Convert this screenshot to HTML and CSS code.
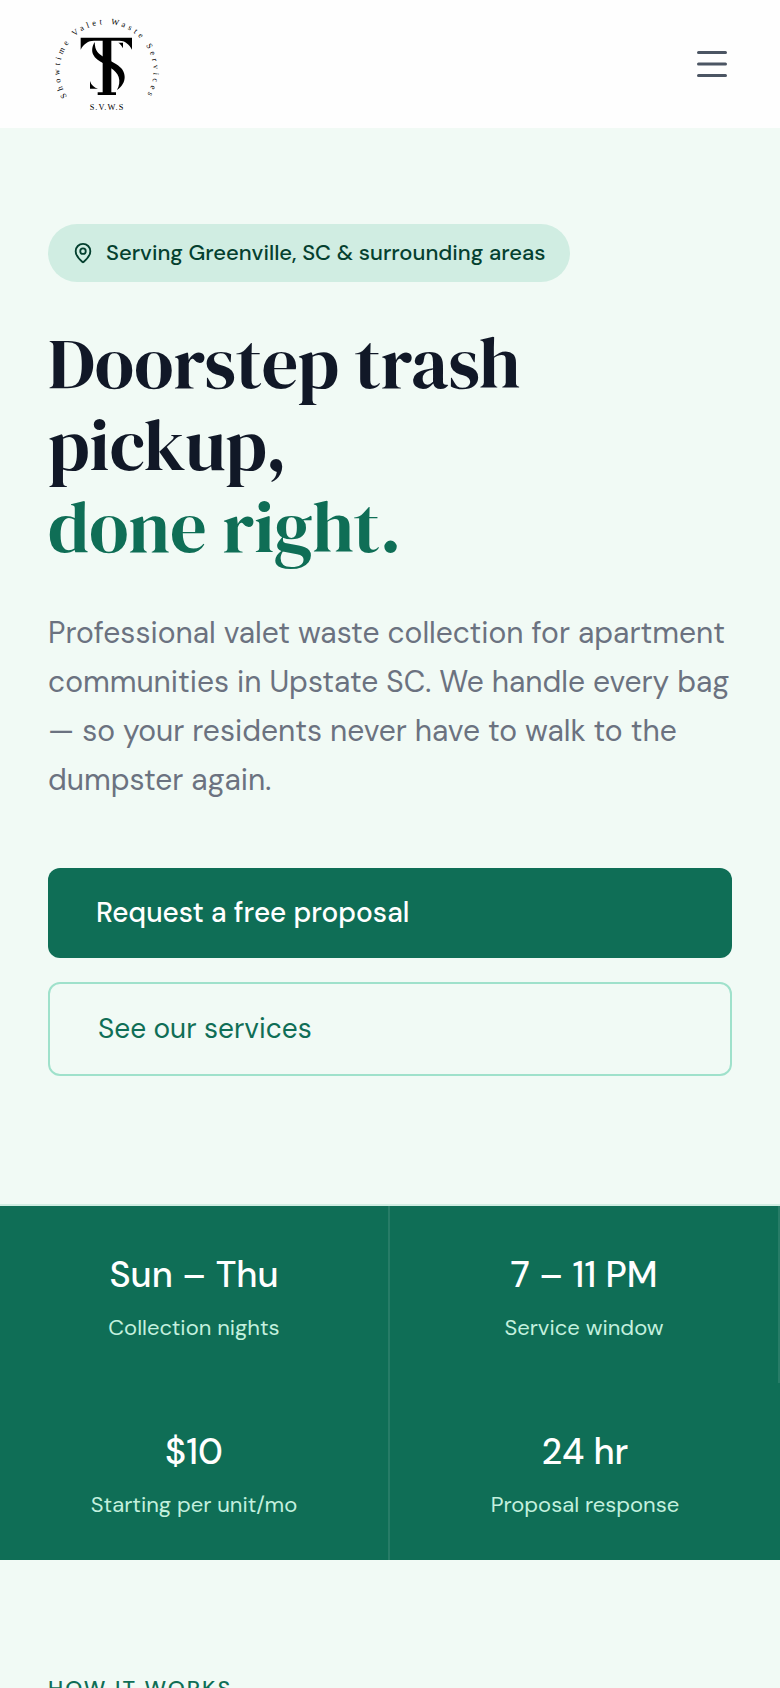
FILE: index.html
```html
<!DOCTYPE html>
<html lang="en">
<head>
<meta charset="utf-8">
<meta name="viewport" content="width=device-width, initial-scale=1">
<title>Showtime Valet Waste Services</title>
<link rel="stylesheet" href="styles.css">
</head>
<body>
<header class="site-header">
  <a class="logo" href="#home" aria-label="Showtime Valet Waste Services">
    <svg class="logo-mark" viewBox="24 24 336 336" aria-hidden="true">
      <defs>
        <path id="ring" d="M81 290A141 141 0 1 1 318 290"/>
      </defs>
      <text class="logo-ring"><textPath href="#ring">Showtime Valet Waste Services</textPath></text>
      <path d="M122 113H276V149C268 132 254 122 238 122H214V277H228V285H173V277H188V122H162C145 122 130 132 122 149Z"/>
      <path d="M164 126C157 137 154 151 159 163C165 176 177 183 190 190L212 204C223 211 232 220 236 231C240 244 238 257 231 270C246 260 254 246 254 231C254 215 245 203 229 193L190 170C174 161 165 153 164 126Z"/>
      <path d="M235 128H249V145C246 138 241 132 235 128ZM150 243V266H174C163 263 154 256 150 243Z"/>
      <text class="logo-initials" x="201" y="330" text-anchor="middle">S.V.W.S</text>
    </svg>
  </a>
  <button class="menu-button" type="button" aria-label="Open menu">
    <svg class="menu-icon" viewBox="0 0 40 40" aria-hidden="true"><path d="M6.500 8.500H33.500M6.500 20H33.500M6.500 31.500H33.500"/></svg>
  </button>
</header>
<main>
  <section class="hero" id="home">
    <p class="badge">
      <svg class="pin-icon" viewBox="0 0 24 24" aria-hidden="true"><path d="M20 10c0 4.993-5.539 10.193-7.399 11.799a1 1 0 0 1-1.202 0C9.539 20.193 4 14.993 4 10a8 8 0 0 1 16 0"/><circle cx="12" cy="10" r="3"/></svg>
      <span>Serving Greenville, SC &amp; surrounding areas</span>
    </p>
    <h1 class="hero-title">Doorstep trash pickup,<br><span class="accent">done right.</span></h1>
    <p class="hero-text">Professional valet waste collection for apartment communities in Upstate SC. We handle every bag — so your residents never have to walk to the dumpster again.</p>
    <div class="actions">
      <a class="button button-primary" href="#contact">Request a free proposal</a>
      <a class="button button-outline" href="#services">See our services</a>
    </div>
  </section>
  <dl class="stats">
    <div class="stat"><dt class="stat-label">Collection nights</dt><dd class="stat-value">Sun – Thu</dd></div>
    <div class="stat"><dt class="stat-label">Service window</dt><dd class="stat-value">7 – 11 PM</dd></div>
    <div class="stat"><dt class="stat-label">Starting per unit/mo</dt><dd class="stat-value">$10</dd></div>
    <div class="stat"><dt class="stat-label">Proposal response</dt><dd class="stat-value">24 hr</dd></div>
  </dl>
  <section class="steps">
    <h2 class="eyebrow">How it works</h2>
  </section>
</main>
</body>
</html>
```
FILE: styles.css
```css
* {
  box-sizing: border-box;
}

body {
  margin: 0;
  background: #f1faf5;
  color: #111827;
  font-family: "DM Sans", "Open Sans", sans-serif;
  font-size: 22px;
}

h1, h2, p, dl, dd {
  margin: 0;
}

.site-header {
  display: flex;
  align-items: center;
  justify-content: space-between;
  padding: 8px 48px;
  background: #fefefe;
}

.logo {
  display: block;
  color: #000;
}

.logo-mark {
  display: block;
  width: 112px;
  height: 112px;
  fill: currentColor;
}

.logo-ring {
  font: 25px "Liberation Serif", serif;
  letter-spacing: 10px;
}

.logo-initials {
  font: 25px "Liberation Serif", serif;
  letter-spacing: 3px;
}

.menu-button {
  padding: 0;
  border: 0;
  background: none;
  color: #4b5563;
  cursor: pointer;
}

.menu-icon {
  display: block;
  width: 40px;
  height: 40px;
  fill: none;
  stroke: currentColor;
  stroke-width: 3;
  stroke-linecap: round;
}

.hero {
  padding: 96px 48px 128px;
  border-bottom: 2px solid #d0ede2;
}

.badge {
  display: flex;
  align-items: center;
  gap: 12px;
  width: fit-content;
  padding: 12px 24px;
  border-radius: 40px;
  background: #d0ede2;
  color: #04402f;
  font-weight: 500;
  line-height: 34px;
}

.pin-icon {
  flex: none;
  width: 22px;
  height: 22px;
  fill: none;
  stroke: currentColor;
  stroke-width: 2;
  stroke-linecap: round;
  stroke-linejoin: round;
}

.hero-title {
  margin-top: 40px;
  font-family: "DM Serif Display", "Liberation Serif", serif;
  font-size: 72px;
  font-weight: 400;
  line-height: 82px;
}

.accent {
  color: #0f6e56;
}

.hero-text {
  margin-top: 40px;
  color: #6b7280;
  font-size: 30px;
  line-height: 49px;
}

.actions {
  display: grid;
  gap: 24px;
  margin-top: 64px;
}

.button {
  padding: 24px 48px;
  border-radius: 12px;
  font-size: 28px;
  line-height: 42px;
  text-decoration: none;
}

.button-primary {
  background: #0f6e56;
  color: #fff;
  font-weight: 500;
}

.button-outline {
  border: 2px solid #9fe1cb;
  color: #0f6e56;
}

.stats {
  display: grid;
  grid-template-columns: 1fr 1fr;
  background: #0f6e56;
  text-align: center;
}

.stat {
  display: flex;
  flex-direction: column-reverse;
  gap: 8px;
  padding: 42px 32px 38px;
  border-right: 2px solid rgba(255, 255, 255, 0.1);
}

.stat:last-child {
  border-right: 0;
}

.stat-value {
  color: #fff;
  font-size: 36px;
  font-weight: 500;
  line-height: 54px;
}

.stat-label {
  color: #c3f0de;
  line-height: 35px;
}

.steps {
  padding: 112px 48px;
}

.eyebrow {
  color: #0f6e56;
  font-size: 22px;
  font-weight: 500;
  letter-spacing: 2px;
  line-height: 33px;
  text-transform: uppercase;
}
```
